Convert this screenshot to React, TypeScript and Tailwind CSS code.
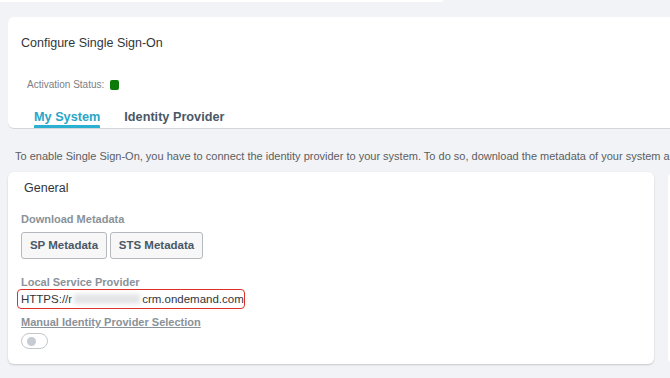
export default function App() {
  return (
    <div className="w-[670px] h-[378px] overflow-hidden bg-[#f2f3f6] relative" style={{ fontFamily: '"Liberation Sans", Arial, sans-serif' }}>
      <div className="h-[2px] w-[443px] bg-white" />
      <div className="pt-[15px] pl-[8px]">
        <div className="bg-white rounded-l-[6px] h-[111px] shadow-[0_1px_0_#d4d6d9] flex flex-col">
          <div className="pl-[13px] pt-[18px] text-[12.5px] text-[#32363a] leading-[16px]">Configure Single Sign-On</div>
          <div className="pl-[19px] pt-[27px] flex items-center gap-[6px]">
            <span className="text-[10px] text-[#7d8084] leading-[14px]">Activation Status:</span>
            <span className="w-[9px] h-[10px] rounded-[2px] bg-[#0b7a0b]" />
          </div>
          <div className="mt-auto pl-[26px] flex gap-[24px]">
            <div className="flex flex-col items-stretch">
              <span className="text-[12.7px] font-bold text-[#2aa6c8] leading-[12px]">My System</span>
              <span className="mt-[2px] h-[3px] bg-[#2ab0d0] rounded-t-[1px]" />
            </div>
            <div className="flex flex-col">
              <span className="text-[12.7px] font-bold text-[#4a5866] leading-[12px]">Identity Provider</span>
              <span className="mt-[2px] h-[3px]" />
            </div>
          </div>
        </div>
      </div>
      <div className="pl-[15px] pt-[21px] text-[11px] text-[#5b5e62] whitespace-nowrap leading-[15px]">
        To enable Single Sign-On, you have to connect the identity provider to your system. To do so, download the metadata of your system and
      </div>
      <div className="pl-[8px] pt-[8px] flex gap-[14px]">
        <div className="w-[646px] h-[192px] bg-white rounded-[6px] shadow-[0_1px_2px_rgba(0,0,0,0.18)] pl-[13px] pt-[8px] shrink-0">
          <div className="pl-[3px] text-[12.5px] text-[#32363a] leading-[16px]">General</div>
          <div className="pt-[16px] text-[11px] font-bold text-[#8a9299] leading-[14px]">Download Metadata</div>
          <div className="pt-[6px] flex gap-[3px]">
            <button className="h-[27px] w-[86px] border border-[#b5b9bd] rounded-[3px] bg-[#f7f7f7] text-[11.5px] font-bold text-[#4a5866]">SP Metadata</button>
            <button className="h-[27px] w-[93px] border border-[#b5b9bd] rounded-[3px] bg-[#f7f7f7] text-[11.5px] font-bold text-[#4a5866]">STS Metadata</button>
          </div>
          <div className="pt-[16px] text-[11px] font-bold text-[#8a9299] leading-[14px]">Local Service Provider</div>
          <div className="ml-[-4px] mt-[0px] w-[228px] h-[20px] border-[1.5px] border-[#e0302a] rounded-[4px] flex items-center pl-[3px] text-[11.5px] text-[#32363a] leading-[14px]">
            <span>HTTPS://r</span>
            <span className="w-[66px] h-[10px] bg-[#e3e4e6] blur-[2px] mx-[2px]" />
            <span>crm.ondemand.com</span>
          </div>
          <div className="pt-[6px] text-[11px] font-bold text-[#8a9299] leading-[14px] underline">Manual Identity Provider Selection</div>
          <div className="mt-[4px] w-[27px] h-[16px] rounded-full border border-[#c3c7cb] bg-white flex items-center pl-[5px]">
            <span className="w-[9px] h-[9px] rounded-full bg-[#c5ccd3]" />
          </div>
        </div>
        <div className="w-[200px] h-[192px] bg-white rounded-[6px] shrink-0" />
      </div>
    </div>
  );
}
